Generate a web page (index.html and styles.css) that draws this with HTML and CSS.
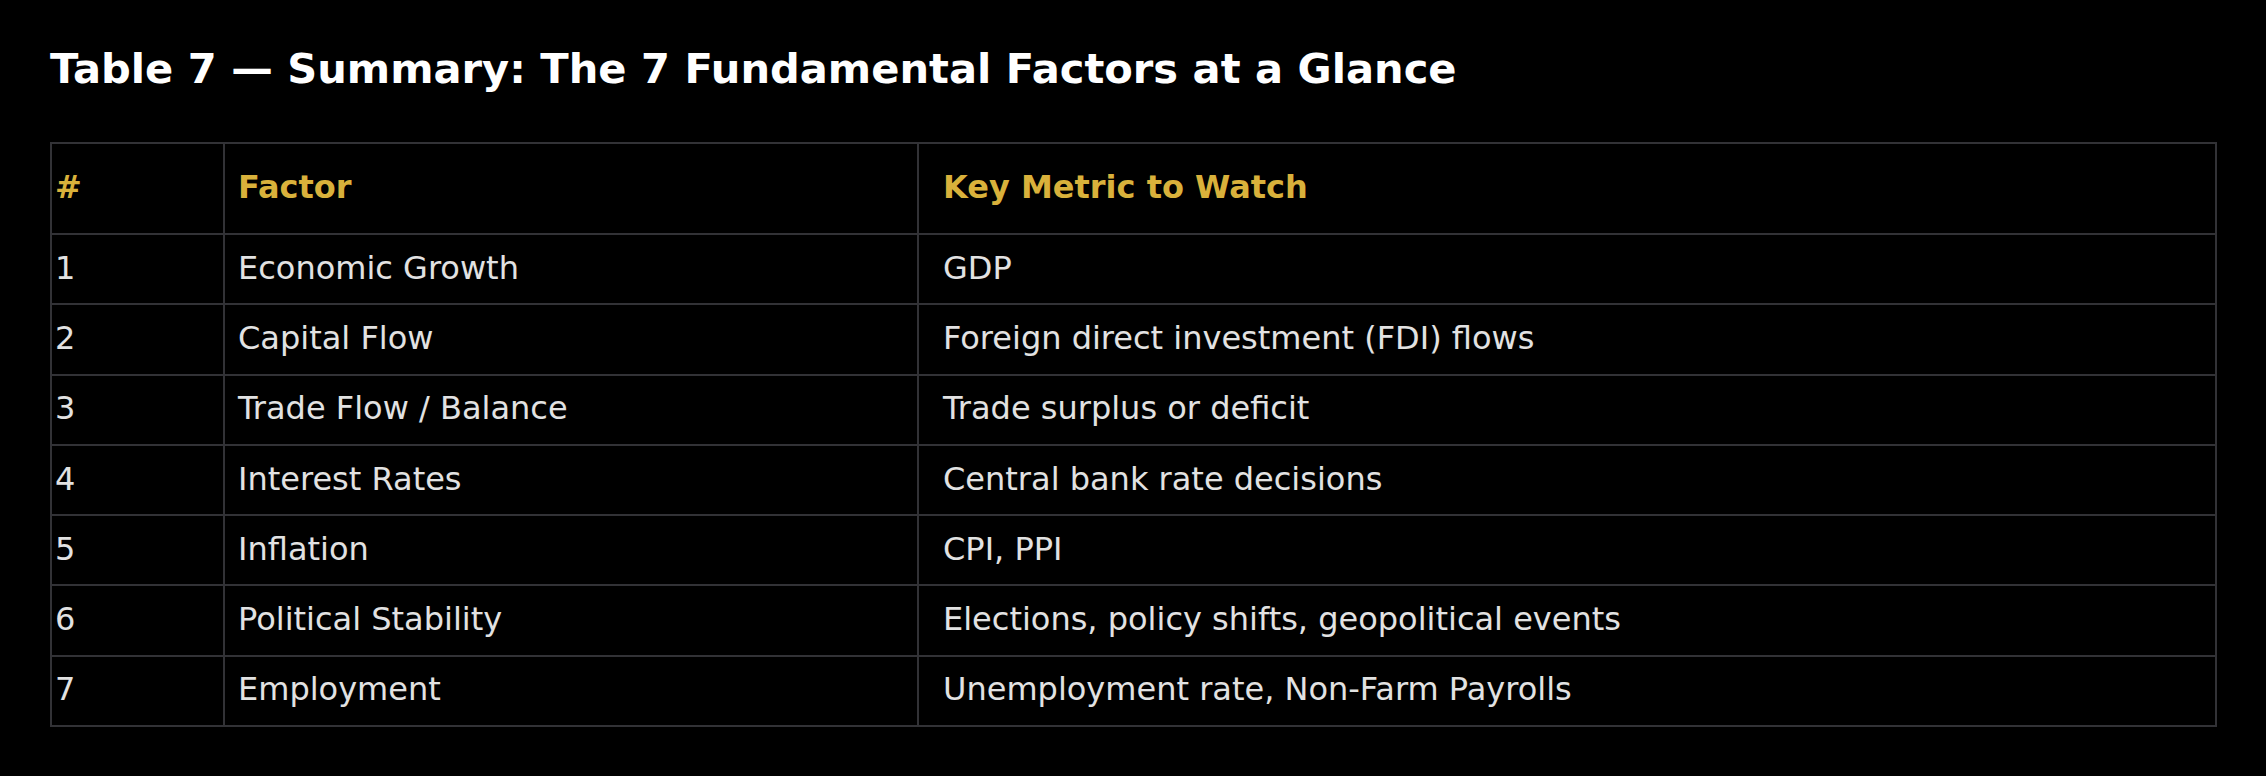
FILE: index.html
```html
<!DOCTYPE html>
<html>
<head>
<meta charset="utf-8">
<link rel="stylesheet" href="styles.css">
</head>
<body>
<h1 class="title">Table 7 — Summary: The 7 Fundamental Factors at a Glance</h1>
<table class="summary">
  <colgroup>
    <col class="c-num">
    <col class="c-factor">
    <col class="c-metric">
  </colgroup>
  <thead>
    <tr><th class="num">#</th><th class="factor">Factor</th><th class="metric">Key Metric to Watch</th></tr>
  </thead>
  <tbody>
    <tr><td class="num">1</td><td class="factor">Economic Growth</td><td class="metric">GDP</td></tr>
    <tr><td class="num">2</td><td class="factor">Capital Flow</td><td class="metric">Foreign direct investment (FDI) flows</td></tr>
    <tr><td class="num">3</td><td class="factor">Trade Flow / Balance</td><td class="metric">Trade surplus or deficit</td></tr>
    <tr><td class="num">4</td><td class="factor">Interest Rates</td><td class="metric">Central bank rate decisions</td></tr>
    <tr><td class="num">5</td><td class="factor">Inflation</td><td class="metric">CPI, PPI</td></tr>
    <tr><td class="num">6</td><td class="factor">Political Stability</td><td class="metric">Elections, policy shifts, geopolitical events</td></tr>
    <tr><td class="num">7</td><td class="factor">Employment</td><td class="metric">Unemployment rate, Non-Farm Payrolls</td></tr>
  </tbody>
</table>
</body>
</html>
```

FILE: styles.css
```css
html, body {
  margin: 0;
  background: #000;
}
body {
  padding: 44px 49px 0 50px;
  font-family: "DejaVu Sans", sans-serif;
  color: #e2e2e2;
}
.title {
  margin: 0 0 48px 0;
  font-size: 41.6px;
  line-height: 50px;
  font-weight: bold;
  color: #ffffff;
}
.summary {
  width: 100%;
  border-collapse: collapse;
  border: 2px solid #323236;
  font-size: 32px;
}
.c-num { width: 173px; }
.c-factor { width: 694px; }
th, td {
  border: 2px solid #323236;
  padding: 0;
  text-align: left;
  vertical-align: middle;
}
th {
  height: 85px;
  padding-bottom: 4px;
  font-weight: bold;
  color: #d9b13b;
}
td {
  height: 65.3px;
  padding-bottom: 3px;
  font-weight: normal;
}
.num { padding-left: 3px; }
.factor { padding-left: 13px; }
.metric { padding-left: 24px; }
```
